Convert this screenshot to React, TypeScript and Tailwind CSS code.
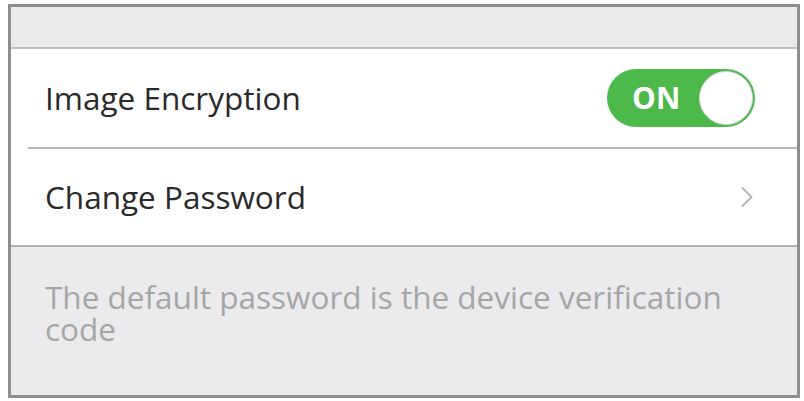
import { ChevronRight } from 'lucide-react'

export default function App() {
  return (
    <div className="w-[804px] h-[401px] bg-white pl-2 pt-1 font-['Open_Sans',sans-serif]">
      <div className="w-[792px] h-[394px] border-[3px] border-[#8e8e8e] flex flex-col overflow-hidden">
        <div className="h-[42px] bg-[#ebebee] border-b-2 border-[#bdbdbd]" />

        <div className="bg-white">
          <div className="pl-[17px]">
            <div className="h-[100px] flex items-center justify-between pl-[17px] pr-[42px] border-b-2 border-[#b8b8b8]">
              <span className="text-[31.5px] text-[#2a2a2a]">Image Encryption</span>
              <div className="w-[148px] h-[58px] rounded-full bg-[#4cb94a] flex items-center justify-between pl-[25px] pr-[2px]">
                <span className="text-white font-bold text-[30px] leading-none">ON</span>
                <div className="w-[54px] h-[54px] rounded-full bg-white border border-[#d6d6d6]" />
              </div>
            </div>
          </div>
          <div className="h-[98px] flex items-center justify-between pl-[34px] pr-[32px] border-b-2 border-[#b4b4b4]">
            <span className="text-[31.5px] text-[#2a2a2a]">Change Password</span>
            <ChevronRight className="w-[36px] h-[36px] text-[#b4b4b4]" strokeWidth={1.3} />
          </div>
        </div>

        <div className="flex-1 bg-[#ebebee] px-[34px] pt-[34px]">
          <p className="text-[31.5px] leading-[32px] text-[#a6a6a6] w-[720px]">
            The default password is the device verification code
          </p>
        </div>
      </div>
    </div>
  )
}
